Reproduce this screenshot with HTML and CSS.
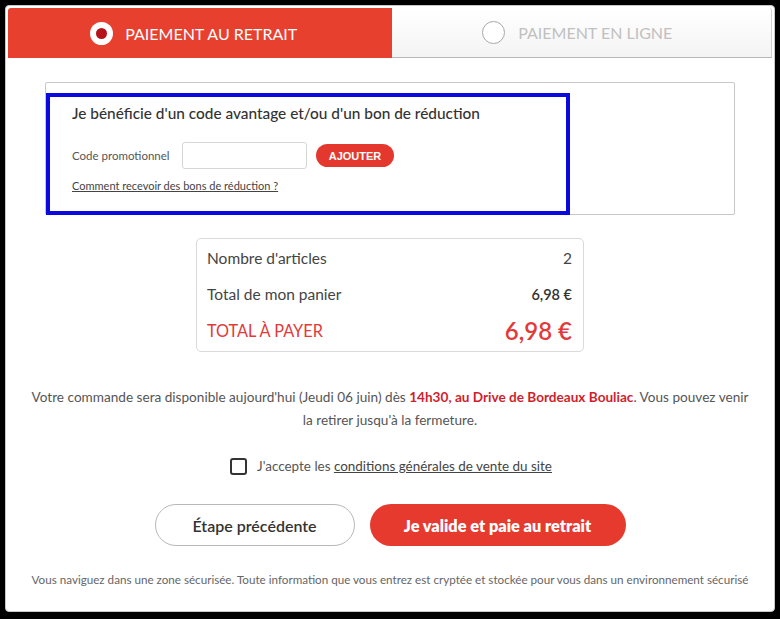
FILE: index.html
```html
<!DOCTYPE html>
<html lang="fr">
<head>
<meta charset="utf-8">
<title>Paiement</title>
<link rel="stylesheet" href="styles.css">
</head>
<body>
<div class="card">
  <div class="tabs">
    <div class="tab tab-active">
      <span class="radio radio-on"><span class="radio-dot"></span></span>
      <span class="tab-label">PAIEMENT AU RETRAIT</span>
    </div>
    <div class="tab tab-idle">
      <span class="radio radio-off"></span>
      <span class="tab-label">PAIEMENT EN LIGNE</span>
    </div>
  </div>

  <div class="promo">
    <div class="promo-inner">
      <div class="promo-title">Je bénéficie d'un code avantage et/ou d'un bon de réduction</div>
      <div class="promo-row">
        <label class="promo-label">Code promotionnel</label>
        <input class="promo-input" type="text">
        <button class="btn-add">AJOUTER</button>
      </div>
      <a class="promo-link" href="#">Comment recevoir des bons de réduction ?</a>
    </div>
  </div>

  <div class="summary">
    <div class="sum-row"><span>Nombre d'articles</span><span>2</span></div>
    <div class="sum-row"><span>Total de mon panier</span><span class="sum-val">6,98 €</span></div>
    <div class="sum-row sum-total"><span class="total-label">TOTAL À PAYER</span><span class="total-val">6,98 €</span></div>
  </div>

  <p class="info">Votre commande sera disponible aujourd'hui (Jeudi 06 juin) dès <strong class="hl">14h30, au Drive de Bordeaux Bouliac</strong>. Vous pouvez venir<br>la retirer jusqu'à la fermeture.</p>

  <div class="accept">
    <span class="checkbox"></span>
    <span>J'accepte les <a class="accept-link" href="#">conditions générales de vente du site</a></span>
  </div>

  <div class="actions">
    <button class="btn btn-prev">Étape précédente</button>
    <button class="btn btn-next">Je valide et paie au retrait</button>
  </div>

  <p class="secure">Vous naviguez dans une zone sécurisée. Toute information que vous entrez est cryptée et stockée pour vous dans un environnement sécurisé</p>
</div>
</body>
</html>
```

FILE: styles.css
```css
* { box-sizing: border-box; }
html, body { margin: 0; padding: 0; }
body {
  background: #000;
  font-family: "Lato", "Open Sans", sans-serif;
  color: #444;
}
.card {
  margin: 5px;
  width: 770px;
  height: 607px;
  background: #fff;
  border: 1px solid #c8c8c8;
  border-radius: 4px;
  padding: 2px;
}
.tabs {
  display: flex;
  height: 50px;
}
.tab {
  flex: 1;
  display: flex;
  align-items: center;
  justify-content: center;
  padding-right: 12px;
  font-size: 16px;
}
.tab-active {
  background: #e8402f;
  color: #fff;
  border-top-left-radius: 3px;
}
.tab-idle {
  background: linear-gradient(#ffffff, #f4f4f4);
  color: #c0c0c0;
  border-bottom: 1px solid #b8b8b8;
  border-right: 1px solid #d0d0d0;
  border-top-right-radius: 3px;
  padding-right: 8px;
}
.radio {
  width: 23px;
  height: 23px;
  border-radius: 50%;
  margin-right: 12px;
  display: flex;
  align-items: center;
  justify-content: center;
}
.radio-on { background: #fff; }
.radio-dot {
  width: 11px;
  height: 11px;
  border-radius: 50%;
  background: #b5121b;
}
.radio-off {
  border: 1px solid #a8a8a8;
  background: #fff;
  margin-right: 13px;
}

.promo {
  margin: 24px 37px 0;
  height: 133px;
  border: 1px solid #c8c8c8;
  border-radius: 2px;
  padding-top: 10px;
}
.promo-inner {
  width: 524px;
  height: 122px;
  border: 4px solid #0a0ade;
  padding: 6px 0 0 22px;
}
.promo-title {
  font-size: 15.4px;
  line-height: 20px;
  color: #333;
  font-weight: 500;
}
.promo-row {
  display: flex;
  align-items: center;
  margin-top: 19px;
}
.promo-label {
  font-size: 11.5px;
  color: #555;
  width: 110px;
}
.promo-input {
  width: 125px;
  height: 27px;
  border: 1px solid #d6d6d6;
  border-radius: 3px;
  padding: 0 6px;
  margin: 0;
}
.btn-add {
  margin-left: 9px;
  width: 78px;
  height: 23px;
  border: none;
  border-radius: 12px;
  background: #e4382e;
  color: #fff;
  font-family: "Liberation Sans", Arial, sans-serif;
  font-weight: bold;
  font-size: 11px;
  padding: 0;
}
.promo-link {
  display: inline-block;
  margin-top: 10px;
  font-size: 11px;
  color: #444;
  text-decoration: underline;
}

.summary {
  margin: 23px auto 0;
  width: 388px;
  height: 114px;
  border: 1px solid #dadada;
  border-radius: 5px;
  padding: 1px 11px 0 10px;
}
.sum-row {
  display: flex;
  justify-content: space-between;
  align-items: center;
  height: 36px;
  font-size: 15.5px;
  color: #444;
}
.sum-val { font-size: 14.5px; font-weight: 600; color: #333; }
.total-label {
  color: #e2393a;
  font-size: 16.3px;
}
.total-val {
  color: #e2393a;
  font-size: 24px;
  font-weight: 600;
}

.info {
  margin: 34px 0 0;
  text-align: center;
  font-size: 13.6px;
  line-height: 23px;
  color: #555;
}
.hl {
  color: #cf1f2d;
  font-weight: 700;
}
.accept {
  margin-top: 24px;
  display: flex;
  align-items: center;
  justify-content: center;
  font-size: 13.45px;
  color: #555;
  height: 20px;
  padding-left: 2px;
}
.checkbox {
  width: 17px;
  height: 17px;
  border: 2px solid #333;
  border-radius: 3px;
  margin-right: 10px;
}
.accept-link { color: #444; text-decoration: underline; }

.actions {
  margin-top: 28px;
  display: flex;
  justify-content: center;
  gap: 15px;
}
.btn {
  height: 42px;
  border-radius: 21px;
  font-family: inherit;
  font-size: 16px;
  font-weight: 600;
  padding: 0;
}
.btn-prev {
  width: 200px;
  background: #fff;
  border: 1px solid #b8b8b8;
  color: #333;
}
.btn-next {
  width: 256px;
  background: #e63a2f;
  border: none;
  color: #fff;
  font-weight: 800;
  font-size: 16.3px;
}
.secure {
  margin: 26px 0 0;
  text-align: center;
  font-size: 11.65px;
  line-height: 16px;
  color: #666;
}
```
